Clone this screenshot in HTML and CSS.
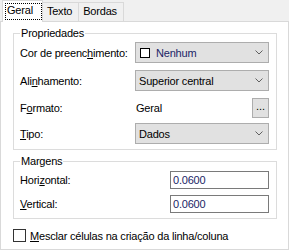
FILE: index.html
```html
<!DOCTYPE html>
<html lang="pt">
<head>
    <meta charset="UTF-8">
    <title>Propriedades da célula</title>
    <link rel="stylesheet" href="styles.css">
</head>
<body>
    <div class="tabs">
        <div class="tab active"><span class="focus">Geral</span></div>
        <div class="tab">Texto</div>
        <div class="tab">Bordas</div>
    </div>

    <div class="panel">
        <fieldset class="group props">
            <legend>Propriedades</legend>

            <div class="row">
                <label>Cor de preenc<u>h</u>imento:</label>
                <div class="combo">
                    <span class="swatch"></span>
                    <span class="value blue">Nenhum</span>
                    <svg class="chev" width="8" height="5" viewBox="0 0 8 5"><polyline points="0.5,0.5 4,4 7.5,0.5" fill="none" stroke="#606060" stroke-width="1"/></svg>
                </div>
            </div>

            <div class="row">
                <label>Ali<u>n</u>hamento:</label>
                <div class="combo">
                    <span class="value">Superior central</span>
                    <svg class="chev" width="8" height="5" viewBox="0 0 8 5"><polyline points="0.5,0.5 4,4 7.5,0.5" fill="none" stroke="#606060" stroke-width="1"/></svg>
                </div>
            </div>

            <div class="row short">
                <label>F<u>o</u>rmato:</label>
                <div class="plain">
                    <span>Geral</span>
                    <button class="dots">...</button>
                </div>
            </div>

            <div class="row">
                <label><u>T</u>ipo:</label>
                <div class="combo">
                    <span class="value">Dados</span>
                    <svg class="chev" width="8" height="5" viewBox="0 0 8 5"><polyline points="0.5,0.5 4,4 7.5,0.5" fill="none" stroke="#606060" stroke-width="1"/></svg>
                </div>
            </div>
        </fieldset>

        <fieldset class="group margins">
            <legend>Margens</legend>

            <div class="row">
                <label>Hori<u>z</u>ontal:</label>
                <input type="text" class="field" value="0.0600">
            </div>

            <div class="row">
                <label><u>V</u>ertical:</label>
                <input type="text" class="field" value="0.0600">
            </div>
        </fieldset>

        <div class="check">
            <span class="box"></span>
            <span><u>M</u>esclar células na criação da linha/coluna</span>
        </div>
    </div>
</body>
</html>
```

FILE: styles.css
```css
body {
    margin: 0;
    width: 289px;
    height: 250px;
    background: #f0f0f0;
    font-family: "Liberation Sans", Arial, sans-serif;
    font-size: 11px;
    letter-spacing: -0.2px;
    color: #000;
    overflow: hidden;
}
.tabs {
    display: flex;
    align-items: flex-end;
    height: 21px;
    padding-left: 2px;
    position: relative;
    z-index: 1;
}
.tab {
    height: 18px;
    line-height: 17px;
    padding: 0 6px 0 4px;
    border: 1px solid #d9d9d9;
    border-bottom: none;
    background: #f0f0f0;
    margin-left: -1px;
}
.tab.active {
    height: 21px;
    margin-bottom: -1px;
    padding: 0 0 0 2px;
    background: #fff;
    margin-left: 0;
    line-height: 19px;
}
.focus {
    display: inline-block;
    height: 17px;
    line-height: 15px;
    margin-top: 1px;
    padding: 0 9px 0 2px;
    outline: 1px dotted #000;
    outline-offset: -1px;
}
.panel {
    box-sizing: border-box;
    height: 229px;
    background: #fff;
    border: 1px solid #d9d9d9;
    padding: 4px 11px 0 12px;
}
.group {
    margin: 0;
    border: 1px solid #dcdcdc;
    padding: 2px 7px 5px 6px;
}
.group legend {
    padding: 0 1px;
    line-height: 14px;
}
.margins {
    margin-top: 4px;
    padding-top: 3px;
}
.row {
    display: grid;
    grid-template-columns: 115px 1fr;
    align-items: center;
    height: 21px;
    margin-bottom: 7px;
}
.row:last-child {
    margin-bottom: 0;
}
.row.short {
    height: 20px;
    margin-bottom: 5px;
}
.margins .row {
    grid-template-columns: 150px 1fr;
    height: 18px;
    margin-bottom: 6px;
}
.margins .row:last-child {
    margin-bottom: 0;
}
.combo {
    box-sizing: border-box;
    height: 21px;
    display: flex;
    align-items: center;
    background: #e1e1e1;
    border: 1px solid #adadad;
    padding: 0 5px 0 3px;
}
.value {
    flex: 1;
}
.blue {
    color: #1a2466;
}
.swatch {
    width: 8px;
    height: 8px;
    border: 1px solid #000;
    background: #fff;
    margin: 0 6px 0 1px;
}
.plain {
    display: flex;
    align-items: center;
    justify-content: space-between;
    height: 20px;
    padding-left: 1px;
}
.dots {
    box-sizing: border-box;
    width: 17px;
    height: 20px;
    padding: 0 0 4px;
    background: #e1e1e1;
    border: 1px solid #adadad;
    font-family: inherit;
    font-size: 11px;
    line-height: 10px;
    color: #000;
}
.field {
    box-sizing: border-box;
    width: 99px;
    height: 18px;
    margin: 0;
    border: 1px solid #7a7a7a;
    padding: 0 2px;
    font-family: inherit;
    font-size: 11px;
    letter-spacing: -0.2px;
    color: #1a2466;
}
.check {
    display: flex;
    align-items: center;
    gap: 4px;
    margin-top: 9px;
    height: 15px;
}
.box {
    box-sizing: border-box;
    width: 13px;
    height: 13px;
    border: 1px solid #333;
    background: #fff;
}
```
